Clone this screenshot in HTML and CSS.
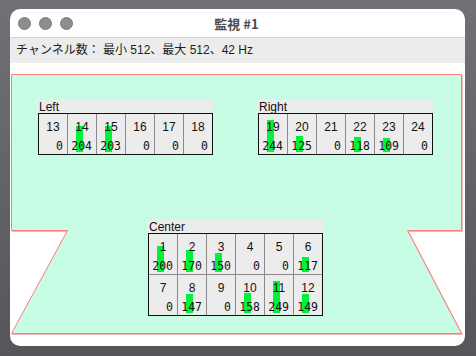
FILE: index.html
```html
<!DOCTYPE html>
<html lang="ja">
<head>
    <meta charset="UTF-8">
    <title>監視 #1</title>
    <link rel="stylesheet" href="styles.css">
</head>
<body>
    <div class="window">
        <div class="titlebar">
            <div class="lights">
                <span class="light"></span>
                <span class="light"></span>
                <span class="light"></span>
            </div>
            <div class="title">監視 #1</div>
        </div>
        <div class="status">チャンネル数： 最小 512、最大 512、42 Hz</div>
        <div class="canvas">
            <svg class="room" width="455" height="283" viewBox="0 0 455 283">
                <polygon class="room-shadow" points="2.5,12.5 452.5,12.5 452.5,168.5 398.5,168.5 452.5,271.5 2.5,271.5 58.5,168.5 2.5,168.5"/>
                <polygon class="room-fill" points="1.5,11.5 451.5,11.5 451.5,167.5 397.5,167.5 451.5,270.5 1.5,270.5 57.5,167.5 1.5,167.5"/>
            </svg>

            <div class="panel panel-left">
                <div class="panel-label">Left</div>
                <div class="grid">
                    <div class="cell"><span class="bar" style="height:0px"></span><span class="ch">13</span><span class="val">0</span></div>
                    <div class="cell"><span class="bar" style="height:26.5px"></span><span class="ch">14</span><span class="val">204</span></div>
                    <div class="cell"><span class="bar" style="height:26.4px"></span><span class="ch">15</span><span class="val">203</span></div>
                    <div class="cell"><span class="bar" style="height:0px"></span><span class="ch">16</span><span class="val">0</span></div>
                    <div class="cell"><span class="bar" style="height:0px"></span><span class="ch">17</span><span class="val">0</span></div>
                    <div class="cell"><span class="bar" style="height:0px"></span><span class="ch">18</span><span class="val">0</span></div>
                </div>
            </div>

            <div class="panel panel-right">
                <div class="panel-label">Right</div>
                <div class="grid">
                    <div class="cell"><span class="bar" style="height:31.7px"></span><span class="ch">19</span><span class="val">244</span></div>
                    <div class="cell"><span class="bar" style="height:16.3px"></span><span class="ch">20</span><span class="val">125</span></div>
                    <div class="cell"><span class="bar" style="height:0px"></span><span class="ch">21</span><span class="val">0</span></div>
                    <div class="cell"><span class="bar" style="height:15.3px"></span><span class="ch">22</span><span class="val">118</span></div>
                    <div class="cell"><span class="bar" style="height:14.2px"></span><span class="ch">23</span><span class="val">109</span></div>
                    <div class="cell"><span class="bar" style="height:0px"></span><span class="ch">24</span><span class="val">0</span></div>
                </div>
            </div>

            <div class="panel panel-center">
                <div class="panel-label">Center</div>
                <div class="grid">
                    <div class="cell"><span class="bar" style="height:26px"></span><span class="ch">1</span><span class="val">200</span></div>
                    <div class="cell"><span class="bar" style="height:22.1px"></span><span class="ch">2</span><span class="val">170</span></div>
                    <div class="cell"><span class="bar" style="height:19.5px"></span><span class="ch">3</span><span class="val">150</span></div>
                    <div class="cell"><span class="bar" style="height:0px"></span><span class="ch">4</span><span class="val">0</span></div>
                    <div class="cell"><span class="bar" style="height:0px"></span><span class="ch">5</span><span class="val">0</span></div>
                    <div class="cell"><span class="bar" style="height:15.2px"></span><span class="ch">6</span><span class="val">117</span></div>
                    <div class="cell"><span class="bar" style="height:0px"></span><span class="ch">7</span><span class="val">0</span></div>
                    <div class="cell"><span class="bar" style="height:19.1px"></span><span class="ch">8</span><span class="val">147</span></div>
                    <div class="cell"><span class="bar" style="height:0px"></span><span class="ch">9</span><span class="val">0</span></div>
                    <div class="cell"><span class="bar" style="height:20.5px"></span><span class="ch">10</span><span class="val">158</span></div>
                    <div class="cell"><span class="bar" style="height:32.4px"></span><span class="ch">11</span><span class="val">249</span></div>
                    <div class="cell"><span class="bar" style="height:19.4px"></span><span class="ch">12</span><span class="val">149</span></div>
                </div>
            </div>
        </div>
    </div>
</body>
</html>
```

FILE: styles.css
```css
body {
    margin: 0;
    background: linear-gradient(#707075, #55555a);
    height: 356px;
    overflow: hidden;
    font-family: "Liberation Sans", "Noto Sans CJK JP", sans-serif;
}
.window {
    position: relative;
    margin: 9px 0 0 10px;
    width: 455px;
    height: 337px;
    background: #fff;
    border-radius: 10px;
    overflow: hidden;
}
.titlebar {
    position: relative;
    height: 28px;
    border-bottom: 1px solid #d2d2d2;
    display: flex;
    align-items: center;
    justify-content: center;
}
.lights {
    position: absolute;
    left: 8px;
    top: 8px;
    display: flex;
    gap: 8px;
}
.light {
    width: 11px;
    height: 11px;
    border-radius: 50%;
    background: #8d8d8d;
    border: 0.5px solid #7a7a7a;
}
.title {
    font-family: "Noto Sans CJK JP", sans-serif;
    font-weight: bold;
    font-size: 13px;
    color: #4b4b4b;
    margin-left: -2px;
}
.status {
    height: 25px;
    line-height: 24px;
    background: #ececec;
    padding-left: 6px;
    font-size: 12px;
    color: #1e1e1e;
}
.canvas {
    position: relative;
    height: 283px;
}
.room {
    position: absolute;
    left: 0;
    top: 0;
}
.room-shadow {
    fill: none;
    stroke: #f5b4b4;
    stroke-width: 1;
}
.room-fill {
    fill: #c8fde5;
    stroke: #ff7b7b;
    stroke-width: 1;
}
.panel {
    position: absolute;
    width: 176px;
}
.panel-left { left: 27px; top: 37px; }
.panel-right { left: 247px; top: 37px; }
.panel-center { left: 137px; top: 157px; }
.panel-label {
    height: 13px;
    line-height: 14px;
    background: #ececec;
    font-size: 12px;
    color: #111;
    padding-left: 2px;
}
.grid {
    margin-left: 1px;
    display: grid;
    grid-template-columns: repeat(6, 1fr);
    grid-auto-rows: 40px;
    gap: 1px;
    background: #8a8a8a;
    border: 1px solid #111;
}
.cell {
    position: relative;
    background: #ececec;
}
.bar {
    position: absolute;
    left: 8px;
    bottom: 2px;
    width: 7px;
    background: #00f33a;
}
.ch {
    position: absolute;
    left: 0;
    right: 0;
    top: 6px;
    text-align: center;
    font-size: 12px;
    color: #111;
}
.val {
    position: absolute;
    right: 4px;
    top: 25px;
    font-family: "DejaVu Sans Mono", monospace;
    font-size: 11.5px;
    color: #111;
}
```
